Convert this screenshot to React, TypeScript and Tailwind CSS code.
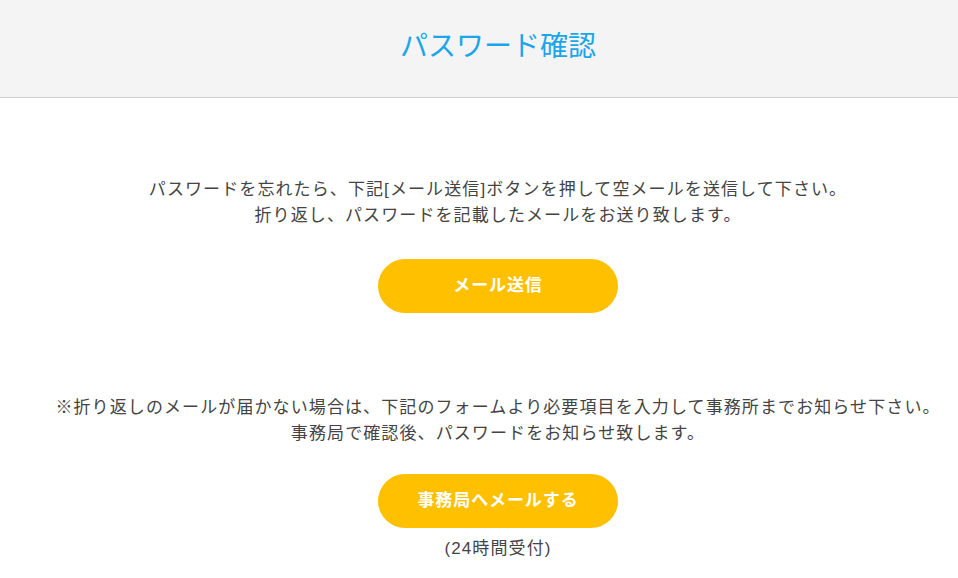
export default function App() {
  return (
    <div
      className="min-h-screen bg-white text-[#444] pl-[38px]"
      style={{ fontFamily: '"Liberation Sans", "Noto Sans CJK JP", sans-serif' }}
    >
      <header className="-ml-[38px] pl-[38px] h-[98px] bg-[#f4f4f4] border-b border-[#cfcfcf] flex items-center justify-center pb-[4px]">
        <h1 className="text-[28px] text-[#1ba6ea] leading-none">パスワード確認</h1>
      </header>

      <main className="flex flex-col items-center text-center text-[17px] tracking-[1.1px]">
        <p className="mt-[79px] leading-[26px]">
          パスワードを忘れたら、下記[メール送信]ボタンを押して空メールを送信して下さい。
          <br />
          折り返し、パスワードを記載したメールをお送り致します。
        </p>
        <button className="mt-[30px] w-[240px] h-[54px] rounded-full bg-[#ffc000] text-white font-bold tracking-[0.9px]">
          メール送信
        </button>

        <p className="mt-[82px] leading-[26px]">
          ※折り返しのメールが届かない場合は、下記のフォームより必要項目を入力して事務所までお知らせ下さい。
          <br />
          事務局で確認後、パスワードをお知らせ致します。
        </p>
        <button className="mt-[27px] w-[240px] h-[54px] rounded-full bg-[#ffc000] text-white font-bold tracking-[0.9px]">
          事務局へメールする
        </button>
        <p className="mt-[8px] leading-[26px]">(24時間受付)</p>
      </main>
    </div>
  );
}
